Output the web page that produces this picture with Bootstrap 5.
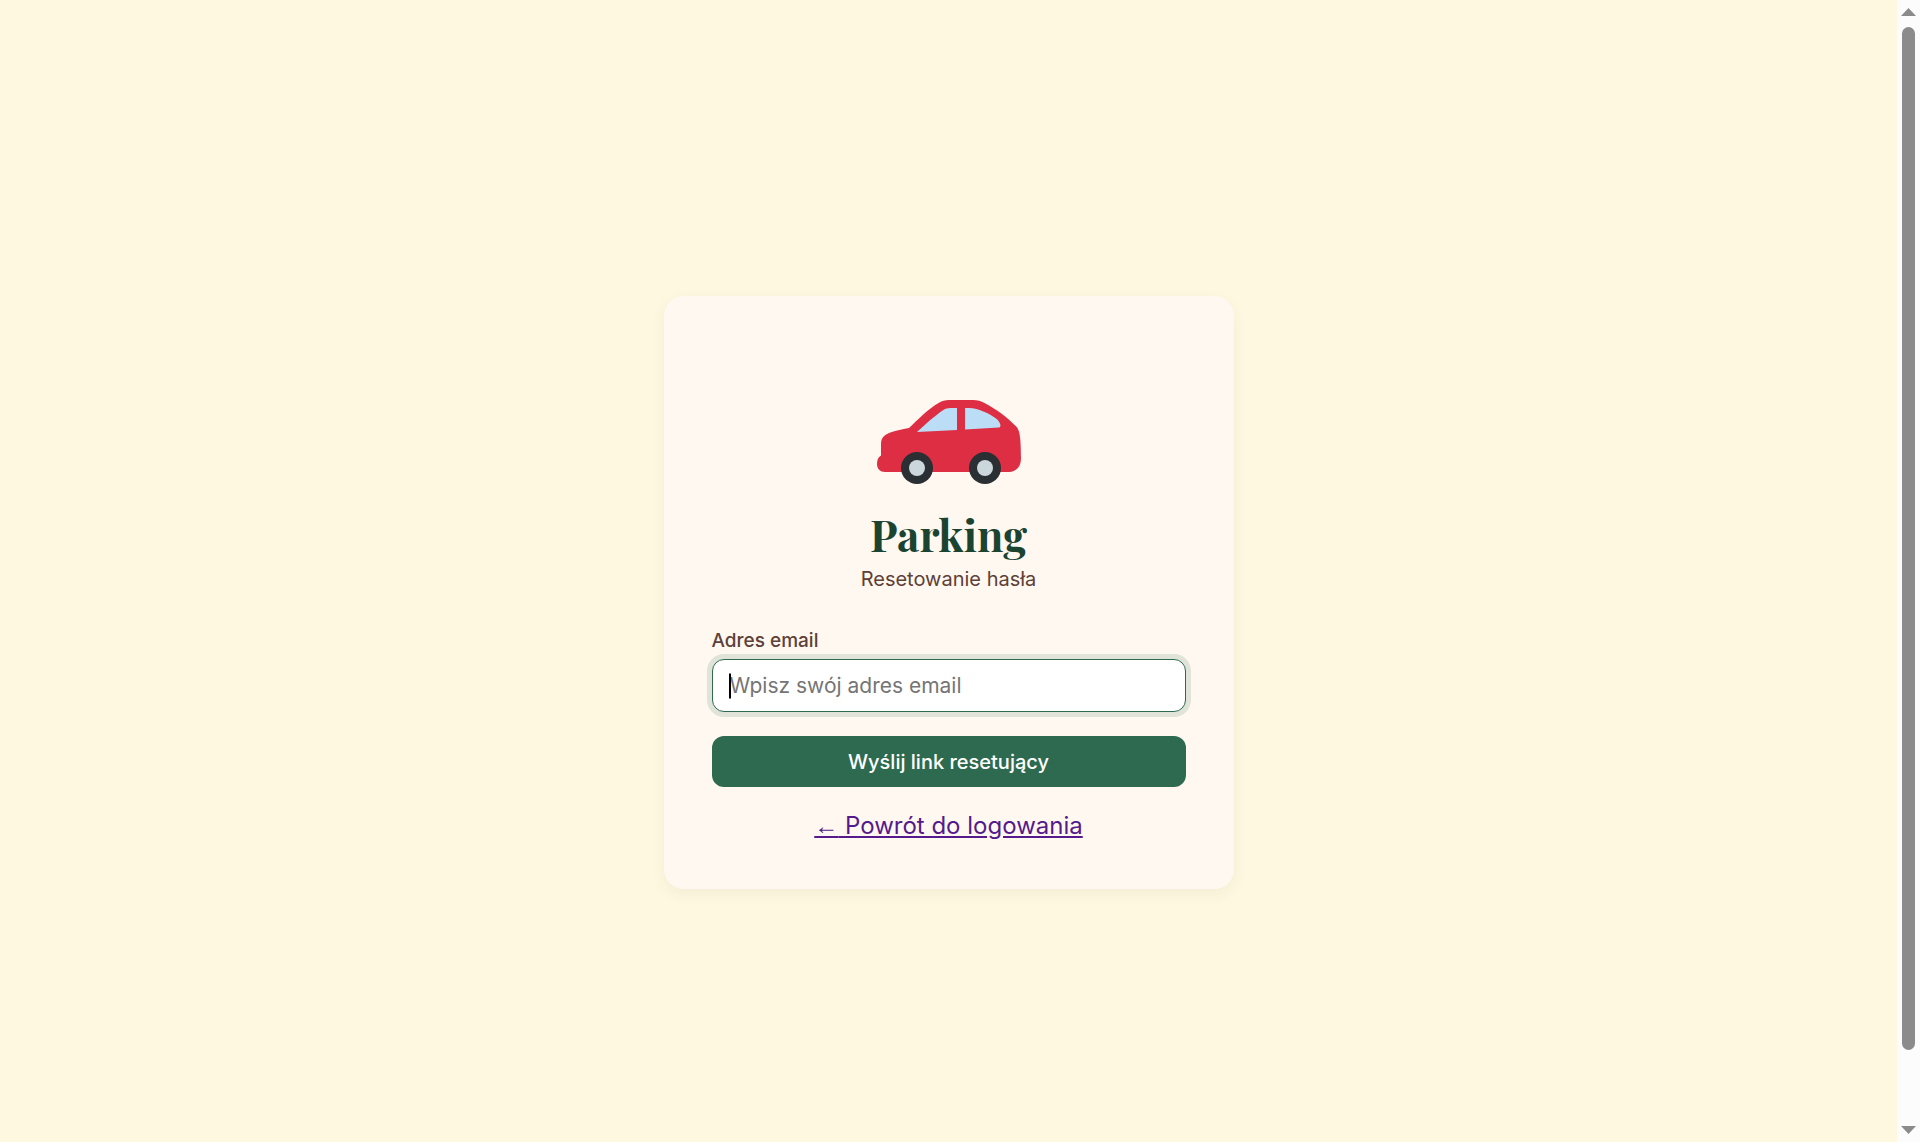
<!DOCTYPE html>
<html lang="pl">
<head>
<meta charset="utf-8">
<meta name="viewport" content="width=device-width, initial-scale=1">
<title>Parking – Resetowanie hasła</title>
<link href="https://cdn.jsdelivr.net/npm/bootstrap@5.3.0/dist/css/bootstrap.min.css" rel="stylesheet">
<style>
body { background: #fff8e1; color: #5d4037; font-family: Inter, "Noto Sans", sans-serif; font-size: 24px; }
.reset-page { padding-top: 43px; }
.reset-card { max-width: 570px; padding: 64px 48px 45px; background: #fff8f0; border-radius: 20px; box-shadow: 0 5px 15px rgba(27, 67, 50, .06); }
.car-logo { width: 144px; height: 144px; }
.brand-title { color: #1b4332; font-family: "Playfair Display", "Liberation Serif", serif; font-size: 43px; font-weight: 700; line-height: 60px; }
.brand-subtitle { font-size: 20px; line-height: 30px; margin-bottom: 32px; }
.email-label { font-size: 19px; font-weight: 500; line-height: 30px; margin-bottom: 3px; }
.email-input, .email-input:focus { height: 53px; padding: 0 17px; font-size: 21px; background: #fff; border: 1px solid #2d6a4f; border-radius: 12px; box-shadow: 0 0 0 5px rgba(45, 106, 79, .15); }
.email-input::placeholder { color: #757575; }
.text-caret { left: 17px; width: 2px; height: 25px; background: #000; }
.send-button, .send-button:hover { height: 51px; padding: 0; margin-top: 24px; color: #fff; background: #2d6a4f; border: 0; border-radius: 12px; font-size: 20px; font-weight: 500; }
.back-link { color: #551a8b; line-height: 36px; margin-top: 21px; }
.back-arrow { font-family: "Liberation Sans", sans-serif; }
.scroll-rail { width: 23px; background: #fcfcfc; padding: 8px 0; }
.scroll-track { width: 13px; margin: 11px 0; }
.scroll-thumb { height: 94%; background: #8b8b8b; border-radius: 7px; }
</style>
<script src="https://cdn.jsdelivr.net/npm/bootstrap@5.3.0/dist/js/bootstrap.bundle.min.js"></script>
</head>
<body class="d-flex vh-100 overflow-hidden">
<main class="reset-page flex-grow-1 d-flex align-items-center justify-content-center">
  <section class="reset-card w-100">
    <header class="text-center">
      <svg class="car-logo d-block mx-auto" viewBox="0 0 36 36" aria-hidden="true">
        <path fill="#dd2e44" d="M1 23.900V21c0-1.800 1.200-2.500 2.700-3 1.400-.5 3-.7 4.300-1 2.300-2.100 4.700-4.700 7.500-6.300.8-.5 1.500-.7 2.500-.7h6c1.200 0 1.900.2 3 .8 2.700 1.400 5.400 3.400 7.800 5.800.8.8 1.200 2.400 1.200 8 0 2-1.200 3.400-3 3.400H2c-1.200 0-2-.8-2-2 0-1 .3-1.700 1-2.100z"/>
        <path fill="#bbddf5" d="M10 18c2.200-2.100 4.500-4.100 6.400-5.400.7-.4 1.200-.6 2-.6H20v5.500zM22 12h1c2.400 0 5.300 1.500 7 2.800.8.7 1.200 2 .5 2.100L22 17.400z"/>
        <circle cx="10" cy="27" r="4" fill="#292f33"/><circle cx="27" cy="27" r="4" fill="#292f33"/>
        <circle cx="10" cy="27" r="2" fill="#ccd6dd"/><circle cx="27" cy="27" r="2" fill="#ccd6dd"/>
      </svg>
      <h1 class="brand-title mb-0">Parking</h1>
      <p class="brand-subtitle">Resetowanie hasła</p>
    </header>
    <form>
      <label class="email-label d-block" for="email">Adres email</label>
      <div class="position-relative">
        <input class="email-input form-control" id="email" type="email" placeholder="Wpisz swój adres email">
        <span class="text-caret position-absolute top-50 translate-middle-y"></span>
      </div>
      <button class="send-button btn w-100 d-block" type="submit">Wyślij link resetujący</button>
    </form>
    <div class="text-center"><a class="back-link d-inline-block" href="#"><span class="back-arrow">←</span> Powrót do logowania</a></div>
  </section>
</main>
<aside class="scroll-rail flex-shrink-0 d-flex flex-column align-items-center" aria-hidden="true">
  <svg class="d-block" width="15" height="8" viewBox="0 0 15 8"><path fill="#8b8b8b" d="M7.500 0 15 8H0z"/></svg>
  <div class="scroll-track flex-grow-1"><div class="scroll-thumb"></div></div>
  <svg class="d-block" width="15" height="8" viewBox="0 0 15 8"><path fill="#8b8b8b" d="M0 0h15L7.500 8z"/></svg>
</aside>
</body>
</html>
